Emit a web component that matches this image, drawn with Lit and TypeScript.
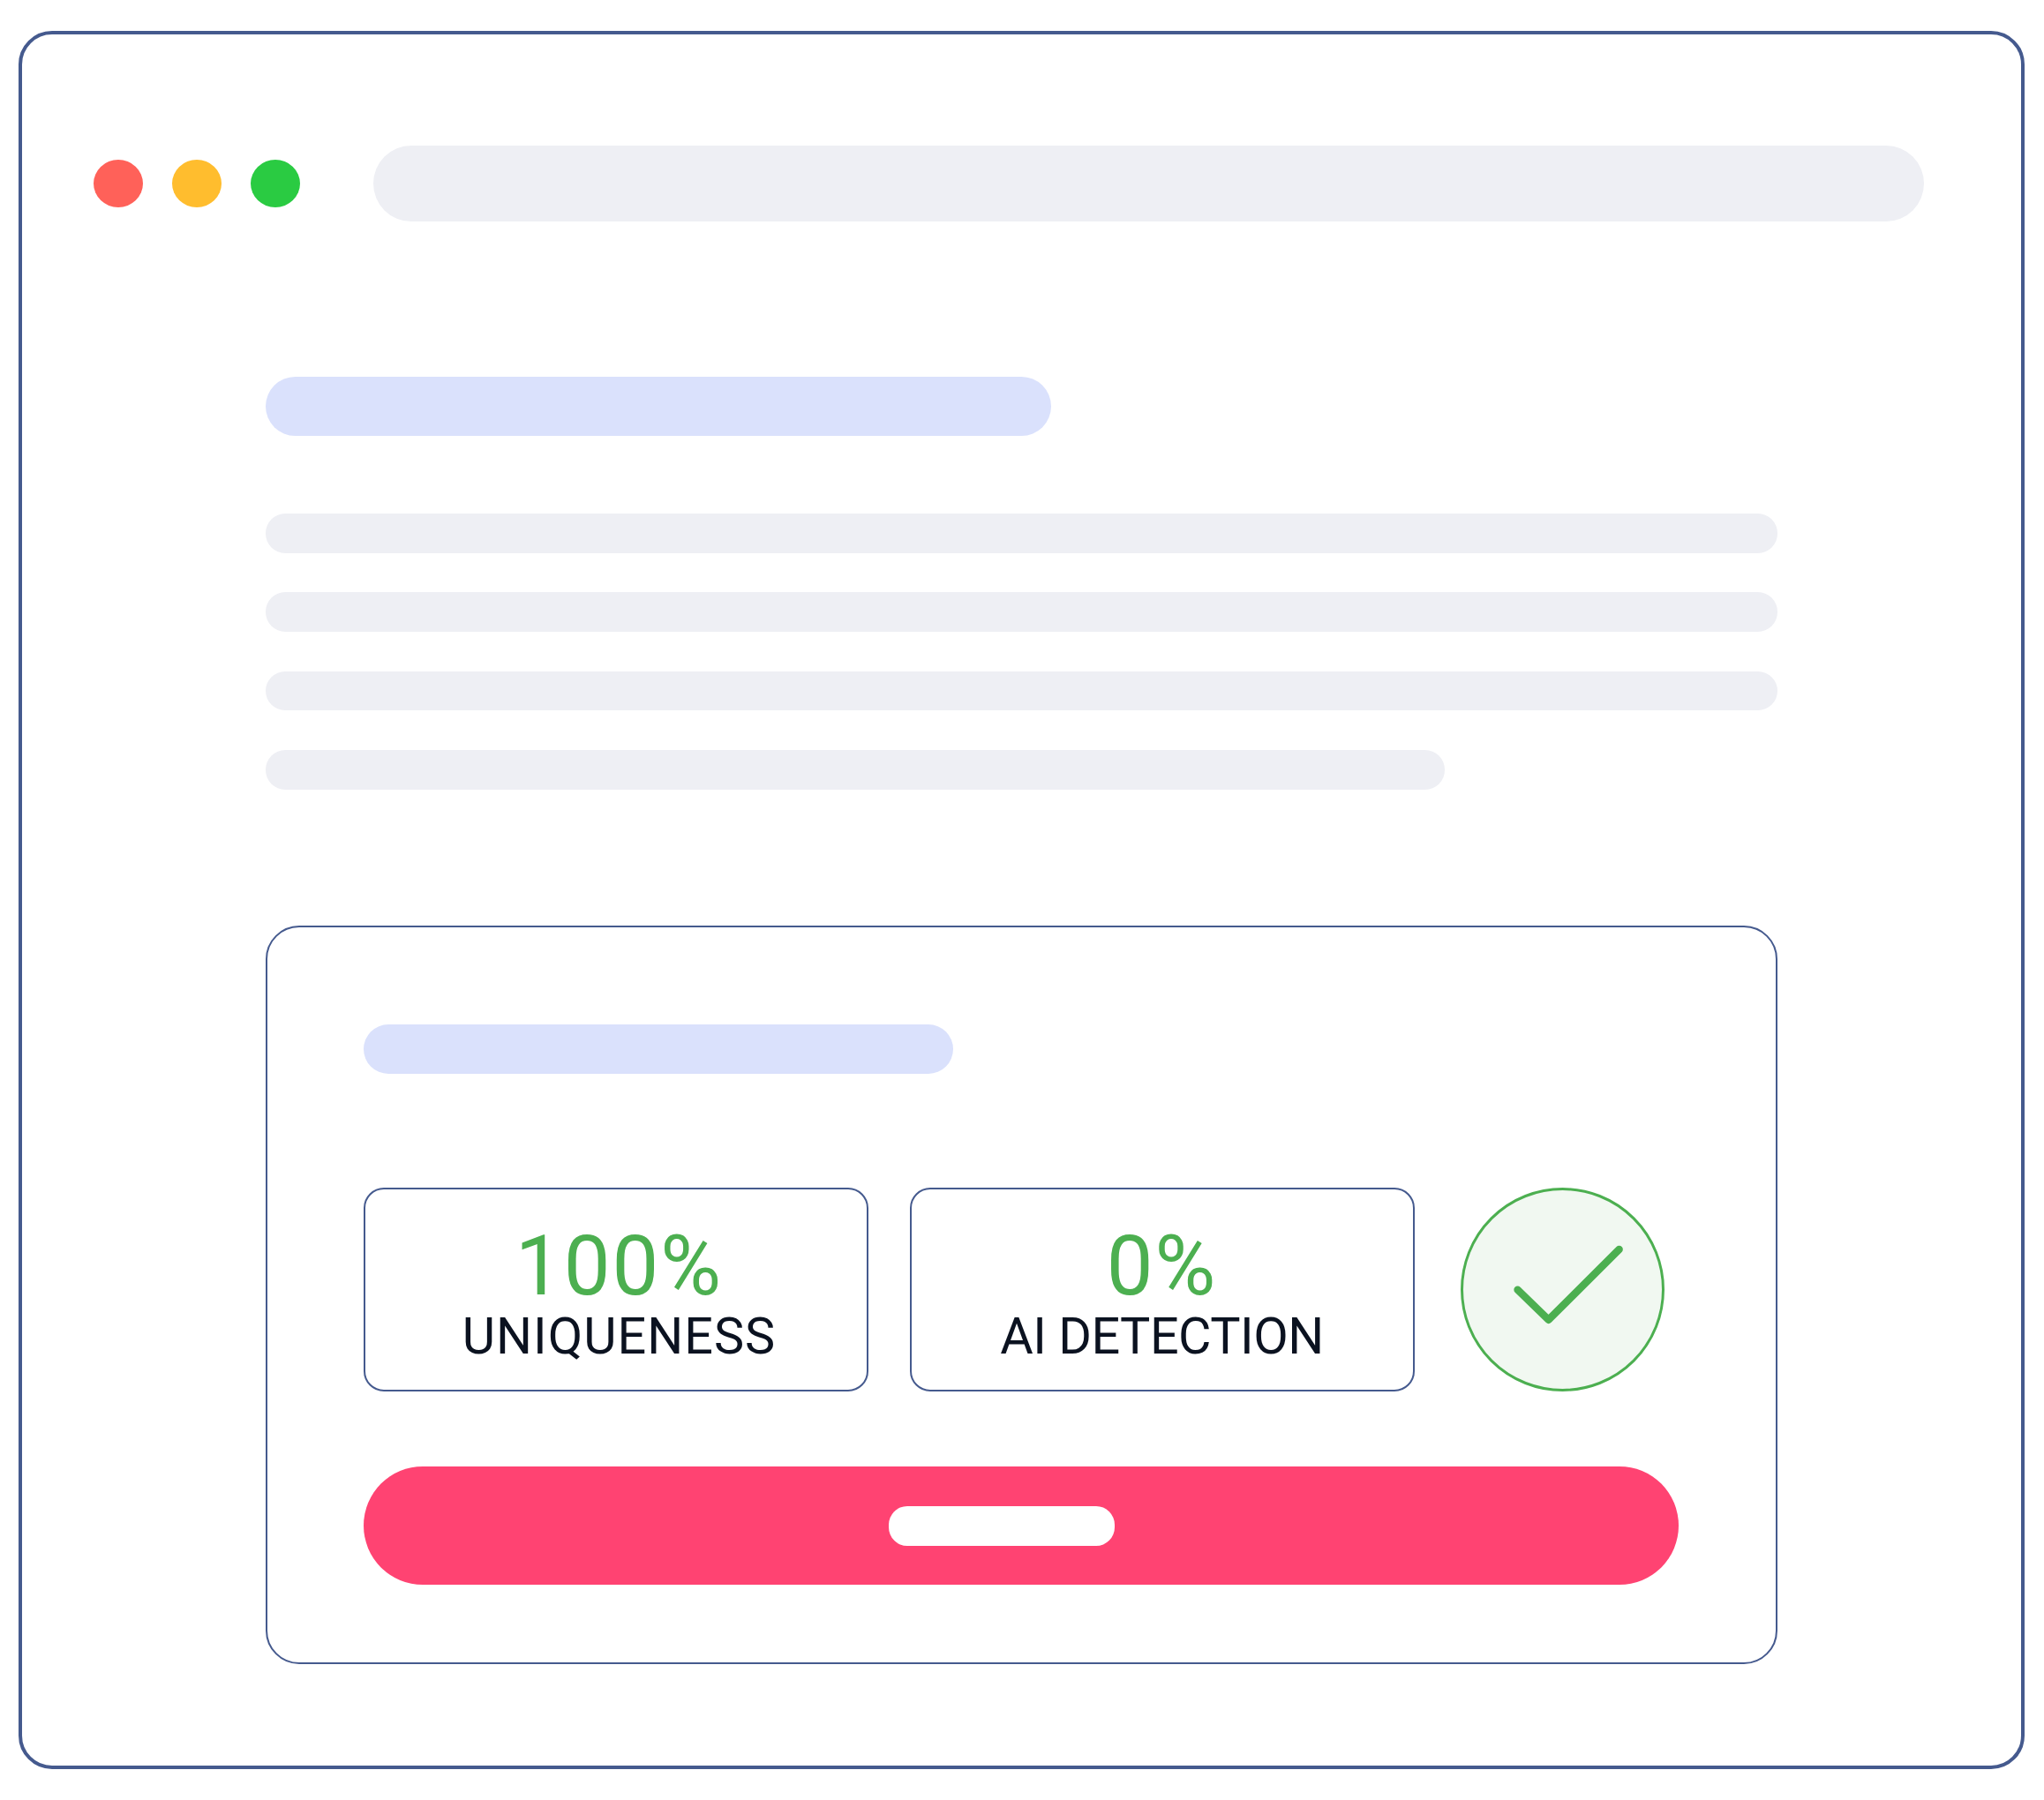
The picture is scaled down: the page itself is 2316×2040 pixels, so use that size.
import { LitElement, css, html } from "lit";
import { customElement } from "lit/decorators.js";

const STATS = [
  { value: "100%", label: "UNIQUENESS", tracking: 1 },
  { value: "0%", label: "AI DETECTION", tracking: -0.5 },
];

@customElement("app-root")
export class AppRoot extends LitElement {
  static styles = css`
    :host {
      display: block;
      width: 2316px;
      height: 2040px;
      background: #fff;
      overflow: hidden;
      font-family: Roboto, "Open Sans", sans-serif;
    }
    * {
      box-sizing: border-box;
    }
    .frame {
      margin: 35px 0 0 21px;
      width: 2273px;
      height: 1970px;
      border: 4.5px solid #455a8e;
      border-radius: 38px;
      padding: 125.5px 0 0 80.5px;
    }
    .toolbar {
      display: flex;
      align-items: center;
      gap: 33px;
    }
    .dot {
      width: 56px;
      height: 54px;
      border-radius: 50%;
    }
    .red { background: #ff6159; }
    .yellow { background: #ffbd2e; }
    .green { background: #2acb42; }
    .address {
      width: 1757px;
      height: 86px;
      margin-left: 50px;
      border-radius: 43px;
      background: #eeeff4;
    }
    .content {
      margin: 176px 0 0 195px;
      width: 1713.5px;
    }
    .title {
      width: 890px;
      height: 67px;
      border-radius: 33.5px;
      background: #dae1fc;
    }
    .lines {
      display: flex;
      flex-direction: column;
      gap: 44.7px;
      margin-top: 88.7px;
    }
    .line {
      height: 44.6px;
      border-radius: 22.3px;
      background: #eeeff4;
    }
    .line.short {
      width: 1336px;
    }
    .panel {
      margin-top: 154px;
      height: 837px;
      border: 2.5px solid #455a8e;
      border-radius: 38px;
      padding: 110.5px 0 0 109px;
    }
    .subtitle {
      width: 668px;
      height: 56px;
      border-radius: 28px;
      background: #dae1fc;
    }
    .stats {
      display: flex;
      align-items: stretch;
      height: 231px;
      margin-top: 128.5px;
    }
    .stat {
      width: 572px;
      border: 2px solid #455a8e;
      border-radius: 23px;
      display: flex;
      flex-direction: column;
      align-items: center;
      padding: 41px 0 0 8px;
      margin-right: 47px;
    }
    .stat + .stat {
      margin-right: 52px;
      padding-left: 0;
    }
    .value {
      font-size: 94px;
      line-height: 92px;
      color: #4caf50;
      letter-spacing: 2px;
    }
    .label {
      font-size: 57.5px;
      font-weight: 400;
      line-height: 67px;
      color: #0b1220;
    }
    .check {
      width: 231px;
      height: 231px;
      display: block;
    }
    .cta {
      display: flex;
      align-items: center;
      width: 1490px;
      height: 134px;
      margin-top: 85.5px;
      padding-left: 595.7px;
      border-radius: 67px;
      background: #ff4372;
    }
    .cta-label {
      width: 256px;
      height: 45px;
      border-radius: 21px;
      background: #fff;
    }
  `;

  render() {
    return html`
      <div class="frame">
        <div class="toolbar">
          <div class="dot red"></div>
          <div class="dot yellow"></div>
          <div class="dot green"></div>
          <div class="address"></div>
        </div>
        <div class="content">
          <div class="title"></div>
          <div class="lines">
            <div class="line"></div>
            <div class="line"></div>
            <div class="line"></div>
            <div class="line short"></div>
          </div>
          <div class="panel">
            <div class="subtitle"></div>
            <div class="stats">
              ${STATS.map(
                (s) => html`
                  <div class="stat">
                    <div class="value">${s.value}</div>
                    <div class="label" style="letter-spacing:${s.tracking}px">${s.label}</div>
                  </div>
                `
              )}
              <svg class="check" viewBox="0 0 231 231" fill="none">
                <circle cx="115.5" cy="115.5" r="114" fill="#f1f8f1" stroke="#4caf50" stroke-width="3"></circle>
                <path d="M64.6 115.7 L99.6 149.7 L179.6 70" stroke="#4caf50" stroke-width="8.5" stroke-linecap="round" stroke-linejoin="round"></path>
              </svg>
            </div>
            <div class="cta"><div class="cta-label"></div></div>
          </div>
        </div>
      </div>
    `;
  }
}
